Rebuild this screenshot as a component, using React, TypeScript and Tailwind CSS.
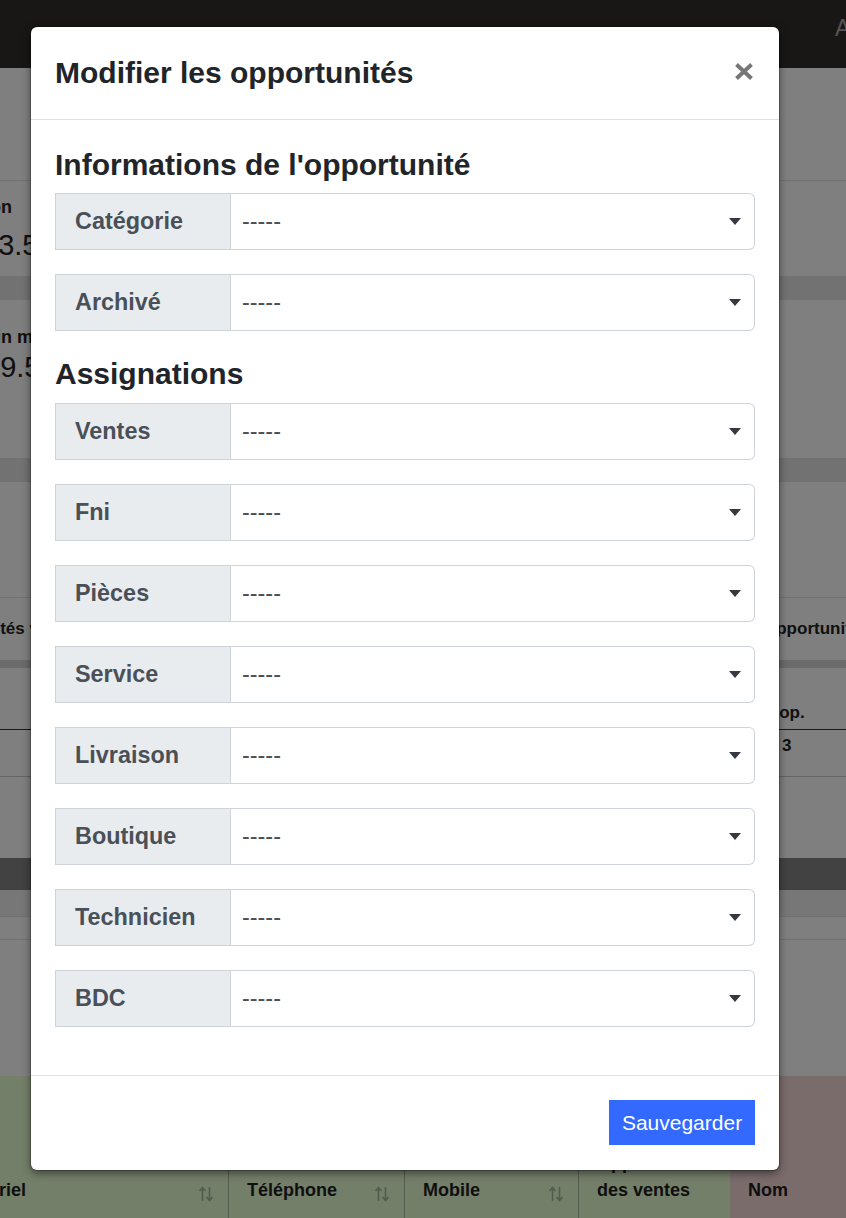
const fields = ["Ventes", "Fni", "Pièces", "Service", "Livraison", "Boutique", "Technicien", "BDC"];

function Caret() {
  return (
    <svg width="12" height="7" viewBox="0 0 12 7" aria-hidden>
      <path d="M0 0h12L6 7z" fill="#343a40" />
    </svg>
  );
}

function SortIcon() {
  return (
    <svg width="16" height="18" viewBox="0 0 16 18" aria-hidden>
      <path d="M4.5 16V3M1.5 6l3-3.5 3 3.5" stroke="#a9b59e" strokeWidth="1.6" fill="none" />
      <path d="M11.5 2v13M8.5 12l3 3.5 3-3.5" stroke="#a9b59e" strokeWidth="1.6" fill="none" />
    </svg>
  );
}

function SelectRow({ label }: { label: string }) {
  return (
    <div className="mb-[24px] flex h-[57px]">
      <div className="flex w-[176px] shrink-0 items-center border border-[#ced4da] bg-[#e9ecef] pl-[19px] text-[23.4px] font-bold text-[#495057]">
        {label}
      </div>
      <div className="flex flex-1 items-center justify-between rounded-r-[6px] border border-l-0 border-[#ced4da] pl-[11px] pr-[13px] text-[23.4px] text-[#495057]">
        <span>-----</span>
        <Caret />
      </div>
    </div>
  );
}

function Background() {
  return (
    <div className="w-[846px] text-[#222]">
      <div className="h-[68px] overflow-hidden whitespace-nowrap bg-[#302e2c] pl-[835px] pt-[11px] text-[23px] text-[#aaaaaa]">
        Aide
      </div>
      <div className="h-[113px] border-b border-[#dee2e6]" />
      <div className="flex h-[95px] flex-col whitespace-nowrap pt-[16px]">
        <div className="-ml-[188px] w-[200px] text-right text-[18px] leading-[20px] font-bold">Taux de conversion</div>
        <div className="-ml-[18px] mt-[11px] text-[29px] leading-[34px]">83.5%</div>
      </div>
      <div className="h-[24px] border-b border-[#dee2e6] bg-[#e4e4e4]" />
      <div className="flex h-[158px] flex-col whitespace-nowrap pt-[27px]">
        <div className="-ml-[28px] text-[18px] leading-[20px] font-bold">Gain max</div>
        <div className="-ml-[16px] mt-[3px] text-[29px] leading-[34px]">29.5%</div>
      </div>
      <div className="h-[24px] border-b border-[#dee2e6] bg-[#e4e4e4]" />
      <div className="h-[116px] border-b border-[#dee2e6]" />
      <div className="flex h-[62px] items-center whitespace-nowrap text-[17px] font-bold">
        <div className="-ml-[82px] w-[600px]">Opportunités vendues</div>
        <div className="ml-auto w-[83px] overflow-hidden">Opportunités</div>
      </div>
      <div className="h-[8px] bg-[#d6d6d6]" />
      <div className="flex h-[62px] items-end justify-end border-b border-[#333] pb-[4px] text-[17px] font-bold">
        <div className="w-[81px] whitespace-nowrap">#&nbsp;op.</div>
      </div>
      <div className="flex h-[47px] justify-end border-b border-[#c8c8c8] pt-[3px] text-[17px] font-bold">
        <div className="w-[64px]">3</div>
      </div>
      <div className="h-[81px]" />
      <div className="h-[32px] bg-[#848484]" />
      <div className="h-[27px] border-b border-[#dee2e6] bg-[#eeeeee]" />
      <div className="h-[23px] border-b border-[#dee2e6]" />
      <div className="h-[136px]" />
      <div className="flex h-[142px] items-stretch whitespace-nowrap text-[18px] leading-[27px] font-bold text-[#1e1e1e]">
        <div className="flex w-[229px] items-end justify-between overflow-hidden border-r border-[#aab79e] bg-[#e9ffd5] pb-[14px] pr-[14px]">
          <span className="-ml-[43px]">Courriel</span>
          <span className="mb-[1px]"><SortIcon /></span>
        </div>
        <div className="flex w-[176px] items-end justify-between border-r border-[#aab79e] bg-[#e9ffd5] pb-[14px] pl-[18px] pr-[14px]">
          <span>Téléphone</span>
          <span className="mb-[1px]"><SortIcon /></span>
        </div>
        <div className="flex w-[174px] items-end justify-between border-r border-[#aab79e] bg-[#e9ffd5] pb-[14px] pl-[18px] pr-[14px]">
          <span>Mobile</span>
          <span className="mb-[1px]"><SortIcon /></span>
        </div>
        <div className="flex w-[151px] flex-col justify-end bg-[#e9ffd5] pb-[14px] pl-[18px]">
          <span>Opportunités</span>
          <span>des ventes</span>
        </div>
        <div className="flex flex-1 items-end bg-[#f6d8d8] pb-[14px] pl-[18px]">
          <span>Nom</span>
        </div>
      </div>
    </div>
  );
}

export default function App() {
  return (
    <div className="relative h-[1218px] w-[846px] overflow-hidden bg-white font-['Liberation_Sans',Arial,sans-serif]">
      <Background />
      <div className="absolute inset-0 bg-black/50 pl-[31px] pt-[27px]">
        <div className="w-[748px] rounded-[6px] bg-white shadow-[0_0_0_1px_rgba(0,0,0,0.2),0_3px_9px_rgba(0,0,0,0.5)]">
          <div className="flex h-[93px] items-center justify-between border-b border-[#dee2e6] px-[24px]">
            <h2 className="text-[30px] leading-[36px] font-bold text-[#212529]">Modifier les opportunités</h2>
            <svg width="20" height="19" viewBox="0 0 20 19" className="mr-[1px] mt-[-3px]" aria-hidden>
              <path d="M2.5 2.5l15 14M17.5 2.5l-15 14" stroke="#777" strokeWidth="4" />
            </svg>
          </div>
          <div className="px-[24px] pt-[27px]">
            <h3 className="mb-[10px] h-[36px] text-[30px] leading-[36px] font-bold text-[#212529]">
              Informations de l'opportunité
            </h3>
            <SelectRow label="Catégorie" />
            <SelectRow label="Archivé" />
            <h3 className="mb-[11px] h-[37px] pt-[1px] text-[30px] leading-[36px] font-bold text-[#212529]">
              Assignations
            </h3>
            {fields.map((f) => (
              <SelectRow key={f} label={f} />
            ))}
            <div className="h-[24px]" />
          </div>
          <div className="flex justify-end border-t border-[#dee2e6] px-[24px] pb-[25px] pt-[24px]">
            <button className="h-[45px] w-[146px] bg-[#3369fe] text-[21px] text-white">Sauvegarder</button>
          </div>
        </div>
      </div>
    </div>
  );
}
